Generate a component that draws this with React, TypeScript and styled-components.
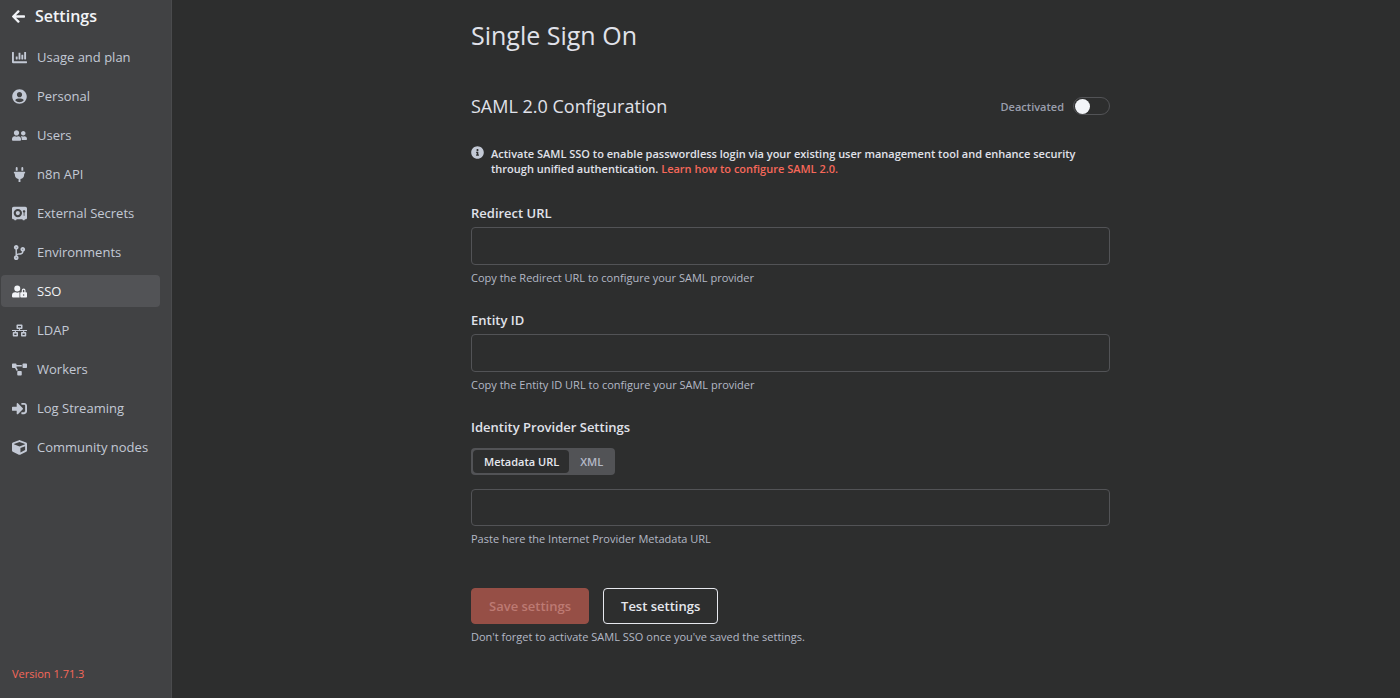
import React, { useState } from 'react';
import styled, { createGlobalStyle } from 'styled-components';
import {
  FaArrowLeft, FaChartBar, FaUserCircle, FaUserFriends, FaPlug, FaCodeBranch, FaUserLock,
  FaNetworkWired, FaProjectDiagram, FaSignInAlt, FaCube, FaInfoCircle,
} from 'react-icons/fa';
import { FaVault } from 'react-icons/fa6';

const GlobalStyle = createGlobalStyle`
  *, *::before, *::after { box-sizing: border-box; }
  body {
    margin: 0;
    background: #2d2e2e;
    color: #e0e2ea;
    font-family: "Open Sans", "Noto Sans", sans-serif;
    font-size: 13px;
  }
  button, input { font-family: inherit; }
  h1, h2, p { margin: 0; }
`;

const Shell = styled.div`
  display: flex;
  min-height: 100vh;
`;

const Sidebar = styled.aside`
  flex: 0 0 172px;
  display: flex;
  flex-direction: column;
  background: #414244;
  border-right: 1px solid #4a4b4d;
`;

const BackButton = styled.button`
  display: flex;
  align-items: center;
  gap: 10px;
  height: 32px;
  padding: 0 12px;
  border: 0;
  background: none;
  color: #f2f4f8;
  font-size: 16px;
  font-weight: 600;
  cursor: pointer;

  svg { width: 13px; height: 15px; }
`;

const Menu = styled.nav`
  display: flex;
  flex-direction: column;
  gap: 7px;
  padding: 9px 11px 0 1px;
`;

const MenuLink = styled.a<{ $active?: boolean }>`
  display: flex;
  align-items: center;
  gap: 10px;
  height: 32px;
  padding: 0 11px;
  border-radius: 4px;
  background: ${(p) => (p.$active ? '#525356' : 'transparent')};
  color: ${(p) => (p.$active ? '#f2f4f8' : '#c3c9d5')};
  text-decoration: none;
  white-space: nowrap;

  svg { flex: none; width: 15px; height: 15px; }
`;

const Version = styled.a`
  margin-top: auto;
  padding: 0 12px 16px;
  color: #f6685a;
  font-size: 11px;
  line-height: 16px;
  text-decoration: none;
`;

const Main = styled.main`
  flex: 1;
  display: flex;
  justify-content: center;
  padding: 17px 16px 48px 25px;
`;

const Content = styled.form`
  width: 100%;
  max-width: 639px;
`;

const Title = styled.h1`
  font-size: 25px;
  font-weight: 400;
  line-height: 36px;
`;

const SectionHeader = styled.div`
  display: flex;
  align-items: center;
  justify-content: space-between;
  margin-top: 41px;
`;

const Subtitle = styled.h2`
  font-size: 18px;
  font-weight: 400;
  line-height: 24px;
`;

const SwitchLabel = styled.label`
  display: flex;
  align-items: center;
  gap: 9px;
  color: #9a9fad;
  font-size: 11px;
  font-weight: 600;
`;

const Switch = styled.input`
  appearance: none;
  display: flex;
  align-items: center;
  width: 37px;
  height: 18px;
  margin: 0;
  padding: 0 1px;
  border: 1px solid #525356;
  border-radius: 9px;
  cursor: pointer;

  &::before {
    content: '';
    width: 15px;
    height: 15px;
    border-radius: 50%;
    background: #f2f4f8;
  }
  &:checked { justify-content: flex-end; background: #31c494; }
`;

const Notice = styled.p`
  display: flex;
  gap: 7px;
  margin-top: 28px;
  font-size: 11px;
  font-weight: 600;
  line-height: 15px;

  svg { flex: none; width: 13px; height: 13px; color: #c3c9d5; }
`;

const NoticeLink = styled.a`
  color: #f6685a;
  text-decoration: none;
`;

const Group = styled.div<{ $gap: number }>`
  display: flex;
  flex-direction: column;
  margin-top: ${(p) => p.$gap}px;
`;

const Label = styled.label`
  margin-bottom: 5px;
  font-weight: 600;
  line-height: 18px;
`;

const TextInput = styled.input<{ $compact?: boolean }>`
  width: 100%;
  height: ${(p) => (p.$compact ? 37 : 38)}px;
  padding: 0 12px;
  border: 1px solid #525356;
  border-radius: 4px;
  outline: 0;
  background: transparent;
  color: #e0e2ea;
  font-size: 13px;
`;

const Hint = styled.small`
  margin-top: 5px;
  color: #b4b9c6;
  font-size: 11px;
  line-height: 16px;
`;

const Tabs = styled.div`
  display: flex;
  align-self: flex-start;
  margin: 7px 0 14px;
  padding: 2px;
  border-radius: 4px;
  background: #525356;
`;

const Tab = styled.button<{ $active: boolean }>`
  height: 23px;
  padding: 0 10px 1px 11px;
  border: 0;
  border-radius: 4px;
  background: ${(p) => (p.$active ? '#2d2e2e' : 'transparent')};
  color: ${(p) => (p.$active ? '#e6e8ee' : '#b4b9c6')};
  font-size: 11px;
  font-weight: 600;
  cursor: pointer;
`;

const Actions = styled.div`
  display: flex;
  gap: 14px;
`;

const Button = styled.button<{ $primary?: boolean }>`
  height: 36px;
  padding: 0 17px;
  border: 1px solid ${(p) => (p.$primary ? '#964f46' : '#e6e8ee')};
  border-radius: 4px;
  background: ${(p) => (p.$primary ? '#964f46' : 'transparent')};
  color: ${(p) => (p.$primary ? '#bd7a73' : '#e6e8ee')};
  font-size: 13px;
  font-weight: 600;
`;

const menu = [
  { label: 'Usage and plan', Icon: FaChartBar },
  { label: 'Personal', Icon: FaUserCircle },
  { label: 'Users', Icon: FaUserFriends },
  { label: 'n8n API', Icon: FaPlug },
  { label: 'External Secrets', Icon: FaVault },
  { label: 'Environments', Icon: FaCodeBranch },
  { label: 'SSO', Icon: FaUserLock },
  { label: 'LDAP', Icon: FaNetworkWired },
  { label: 'Workers', Icon: FaProjectDiagram },
  { label: 'Log Streaming', Icon: FaSignInAlt },
  { label: 'Community nodes', Icon: FaCube },
];

export default function App() {
  const [source, setSource] = useState('Metadata URL');

  return (
    <Shell>
      <GlobalStyle />
      <Sidebar>
        <BackButton type="button"><FaArrowLeft />Settings</BackButton>
        <Menu>
          {menu.map(({ label, Icon }) => (
            <MenuLink key={label} href="#" $active={label === 'SSO'}><Icon />{label}</MenuLink>
          ))}
        </Menu>
        <Version href="#">Version 1.71.3</Version>
      </Sidebar>
      <Main>
        <Content>
          <Title>Single Sign On</Title>
          <SectionHeader>
            <Subtitle>SAML 2.0 Configuration</Subtitle>
            <SwitchLabel>Deactivated<Switch type="checkbox" role="switch" /></SwitchLabel>
          </SectionHeader>
          <Notice>
            <FaInfoCircle />
            <span>
              Activate SAML SSO to enable passwordless login via your existing user management tool
              and enhance security through unified authentication.{' '}
              <NoticeLink href="#">Learn how to configure SAML 2.0.</NoticeLink>
            </span>
          </Notice>
          <Group $gap={28}>
            <Label htmlFor="redirect">Redirect URL</Label>
            <TextInput id="redirect" readOnly />
            <Hint>Copy the Redirect URL to configure your SAML provider</Hint>
          </Group>
          <Group $gap={25}>
            <Label htmlFor="entity">Entity ID</Label>
            <TextInput id="entity" readOnly />
            <Hint>Copy the Entity ID URL to configure your SAML provider</Hint>
          </Group>
          <Group $gap={25}>
            <Label htmlFor="provider">Identity Provider Settings</Label>
            <Tabs>
              {['Metadata URL', 'XML'].map((name) => (
                <Tab key={name} type="button" $active={name === source} onClick={() => setSource(name)}>
                  {name}
                </Tab>
              ))}
            </Tabs>
            <TextInput id="provider" $compact />
            <Hint>Paste here the Internet Provider Metadata URL</Hint>
          </Group>
          <Group $gap={41}>
            <Actions>
              <Button type="button" $primary disabled>Save settings</Button>
              <Button type="button">Test settings</Button>
            </Actions>
            <Hint>Don't forget to activate SAML SSO once you've saved the settings.</Hint>
          </Group>
        </Content>
      </Main>
    </Shell>
  );
}
